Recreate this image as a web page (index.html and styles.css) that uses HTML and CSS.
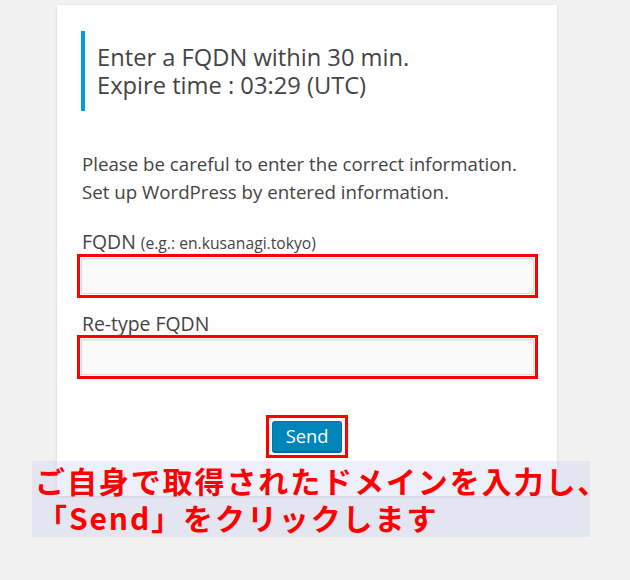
FILE: index.html
```html
<!DOCTYPE html>
<html lang="en">
<head>
    <meta charset="UTF-8">
    <meta name="viewport" content="width=device-width, initial-scale=1.0">
    <title>Enter FQDN</title>
    <link rel="stylesheet" href="styles.css">
</head>
<body>
    <div class="page">
        <div class="card">
            <div class="notice">
                <p>Enter a FQDN within 30 min.<br>Expire time : 03:29 (UTC)</p>
            </div>

            <p class="intro">Please be careful to enter the correct information.<br>Set up WordPress by entered information.</p>

            <div class="field field-first">
                <label for="fqdn">FQDN <small>(e.g.: en.kusanagi.tokyo)</small></label>
                <input type="text" id="fqdn" class="marked">
            </div>

            <div class="field">
                <label for="fqdn2">Re-type FQDN</label>
                <input type="text" id="fqdn2" class="marked">
            </div>

            <div class="actions">
                <span class="mark-box"><button class="send">Send</button></span>
            </div>
        </div>

        <div class="caption">
            <span class="line">ご自身で取得されたドメインを入力し、</span>
            <span class="line indent">「Send」をクリックします</span>
        </div>
    </div>
</body>
</html>
```

FILE: styles.css
```css
body {
    margin: 0;
    background-color: #f1f1f1;
    font-family: "Open Sans", "Noto Sans", sans-serif;
    color: #444;
}

.page {
    position: relative;
    height: 580px;
    padding: 5px 0 0 57px;
    box-sizing: border-box;
}

.card {
    width: 500px;
    height: 491px;
    box-sizing: border-box;
    background-color: #fff;
    box-shadow: 0 1px 3px rgba(0, 0, 0, 0.13);
    padding: 26px 20px 0 24px;
}

.notice {
    border-left: 4px solid #00a0d2;
    padding: 12px 0 12px 12px;
}

.notice p {
    margin: 0;
    font-size: 23.7px;
    line-height: 28px;
}

.intro {
    margin: 39px 0 0 1px;
    font-size: 18.7px;
    line-height: 28px;
}

.field label {
    display: block;
    font-size: 19.4px;
    line-height: 24px;
    margin: 18px 0 3px 1px;
}

.field-first label {
    margin-top: 24px;
}

.field small {
    font-size: 15.7px;
}

.marked {
    display: block;
    width: 453px;
    height: 36px;
    margin: 0;
    box-sizing: border-box;
    border: 1px solid #ddd;
    border-radius: 0;
    background-color: #fbfbfb;
    box-shadow: inset 0 1px 2px rgba(0, 0, 0, 0.07);
    outline: 3px solid #f00;
    outline-offset: 1px;
}

.actions {
    display: flex;
    justify-content: center;
    padding: 40px 4px 0 0;
}

.mark-box {
    display: block;
    border: 3px solid #f00;
    padding: 3px;
}

.send {
    display: block;
    width: 70px;
    height: 31px;
    padding: 0 0 2px;
    background-color: #0085ba;
    border: 1px solid #0073aa;
    border-bottom-color: #006799;
    border-radius: 3px;
    box-shadow: 0 1px 0 #006799;
    color: #fff;
    font-family: "Open Sans", sans-serif;
    font-size: 18.3px;
}

.caption {
    position: absolute;
    left: 32px;
    top: 461px;
    width: 558px;
    height: 76px;
    box-sizing: border-box;
    padding: 1px 0 0 3px;
    background-color: rgba(195, 205, 238, 0.3);
    color: #f00;
    font-family: "Noto Sans CJK JP", sans-serif;
    font-weight: bold;
    font-size: 30px;
    line-height: 37px;
    letter-spacing: 1.9px;
    white-space: nowrap;
}

.caption .line {
    display: block;
}

.caption .indent {
    margin-left: 2px;
}
```
